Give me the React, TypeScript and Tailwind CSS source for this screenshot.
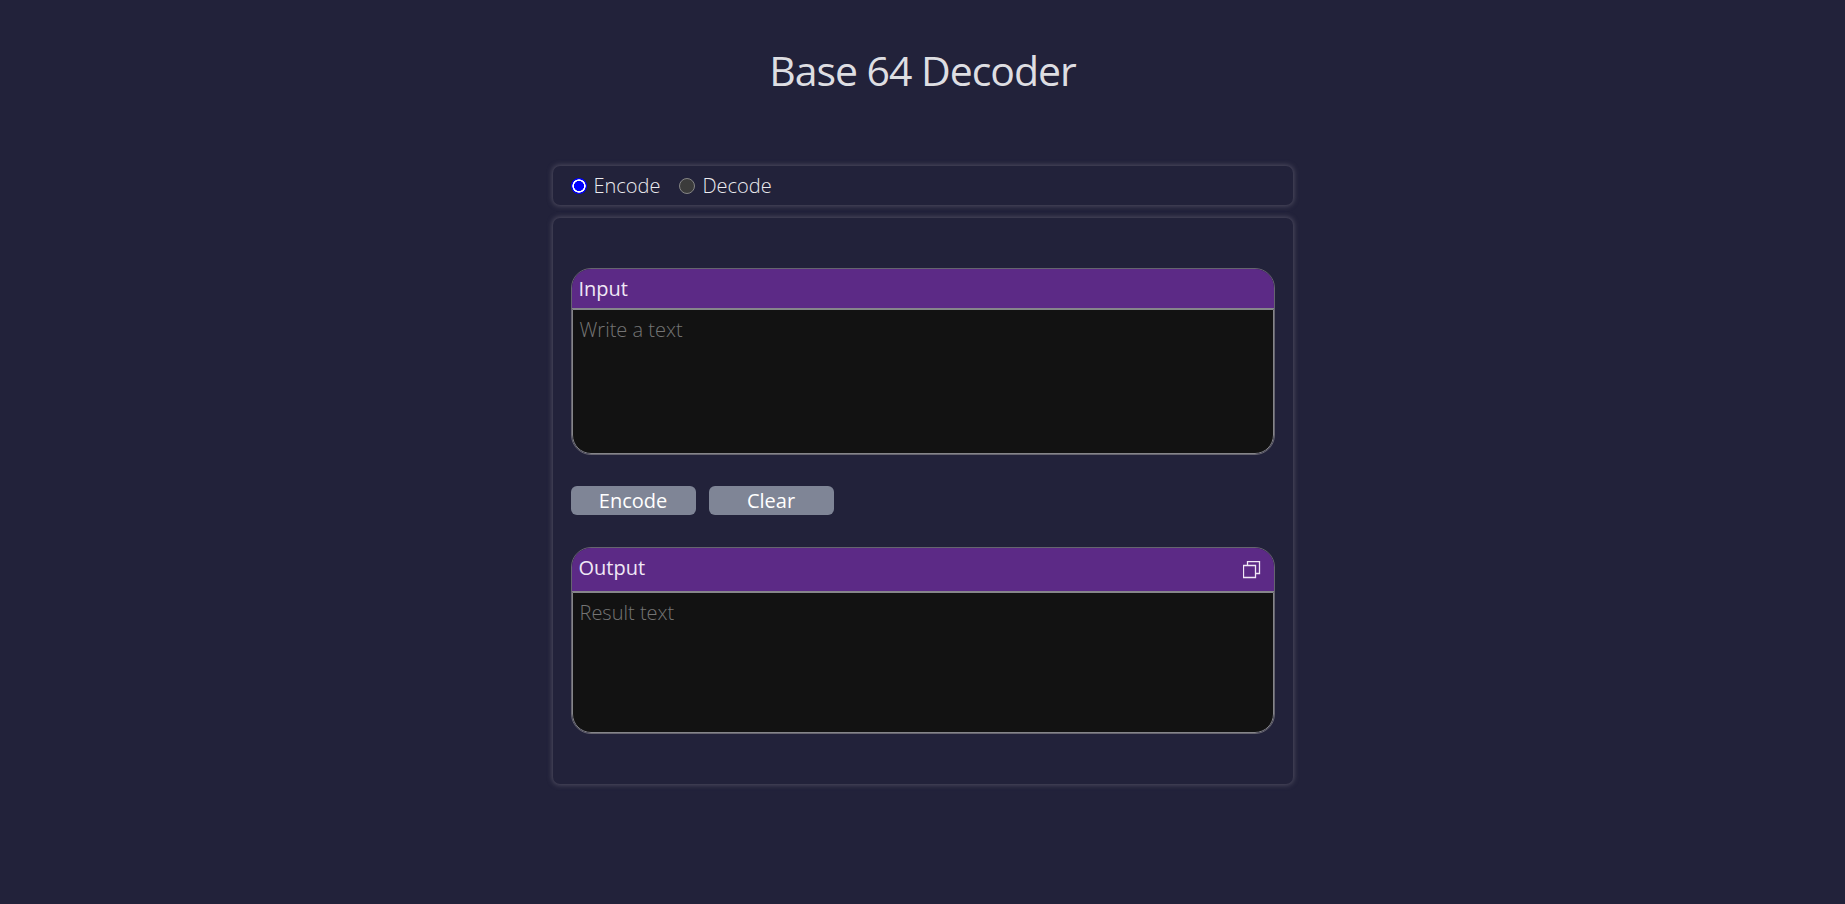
import { useState } from "react";

type Mode = "encode" | "decode";

const CARD = "rounded-[7px] shadow-[0_0_5px_1px_#4f4d60]";
const PANEL = "flex flex-col overflow-hidden rounded-[20px] border border-[#66646f]";
const HEADER =
  "flex items-center border-b border-[#85858a] bg-[#5c2a86] pl-[7px] text-xl text-[#f0e8f5]";
const FIELD =
  "block w-full resize-none rounded-b-[19px] border border-[#85858a] bg-[#121212] px-[7px] pt-1.5 text-xl leading-7 font-light text-[#dedee2] outline-none placeholder:text-[#757575]";
const RADIO =
  "size-4 appearance-none rounded-full border border-[#858585] bg-[#3b3b3b] checked:border-0 checked:bg-[radial-gradient(circle_closest-side,#0000ff_60%,#ffffff_66%,#ffffff_80%,#0000ff_86%)]";
const BUTTON =
  "h-[29px] w-[125px] rounded-md bg-[#7f8596] text-center text-xl leading-7 font-medium text-white";

function CopyIcon() {
  return (
    <svg width="18" height="18" viewBox="0 0 18 18" fill="none" stroke="#f0e8f5" strokeWidth="1.3" aria-hidden="true">
      <path d="M.5 4.500h12v12H.5zM4.500 4.500v-4h12v12h-4" />
    </svg>
  );
}

export default function App() {
  const [mode, setMode] = useState<Mode>("encode");
  const [input, setInput] = useState("");
  const [output, setOutput] = useState("");

  const convert = () => {
    try {
      setOutput(mode === "encode" ? btoa(input) : atob(input));
    } catch {
      setOutput("Invalid input");
    }
  };

  const clear = () => {
    setInput("");
    setOutput("");
  };

  return (
    <div className="min-h-screen bg-[#22223a] px-4 pt-10 pb-10 font-['Open_Sans',sans-serif] text-[#dedee2]">
      <h1 className="text-center text-[41px] leading-[60px] font-normal tracking-tight">Base 64 Decoder</h1>
      <main className="mx-auto mt-[66px] flex max-w-[740px] flex-col gap-[13px]">
        <div className={`${CARD} flex h-[39px] items-center gap-[19px] px-[18px] text-xl leading-7 font-light text-[#ececf0]`}>
          <label className="flex items-center gap-[7px]">
            <input type="radio" name="mode" className={RADIO} checked={mode === "encode"} onChange={() => setMode("encode")} />
            Encode
          </label>
          <label className="flex items-center gap-[7px]">
            <input type="radio" name="mode" className={RADIO} checked={mode === "decode"} onChange={() => setMode("decode")} />
            Decode
          </label>
        </div>

        <div className={`${CARD} px-[18px] py-[50px]`}>
          <section className={PANEL}>
            <div className={`${HEADER} h-10`}>
              <label htmlFor="input" className="self-start leading-[39px]">
                Input
              </label>
            </div>
            <textarea id="input" className={`${FIELD} h-[145px]`} placeholder="Write a text" value={input} onChange={(e) => setInput(e.target.value)} />
          </section>

          <div className="mt-[31px] mb-8 flex gap-[13px]">
            <button type="button" className={BUTTON} onClick={convert}>
              {mode === "encode" ? "Encode" : "Decode"}
            </button>
            <button type="button" className={BUTTON} onClick={clear}>
              Clear
            </button>
          </div>

          <section className={PANEL}>
            <div className={`${HEADER} h-[44px] justify-between pr-[13px]`}>
              <label htmlFor="output" className="self-start leading-[39px]">
                Output
              </label>
              <button type="button" aria-label="Copy output" onClick={() => navigator.clipboard.writeText(output)}>
                <CopyIcon />
              </button>
            </div>
            <textarea id="output" readOnly className={`${FIELD} h-[141px]`} placeholder="Result text" value={output} />
          </section>
        </div>
      </main>
    </div>
  );
}
